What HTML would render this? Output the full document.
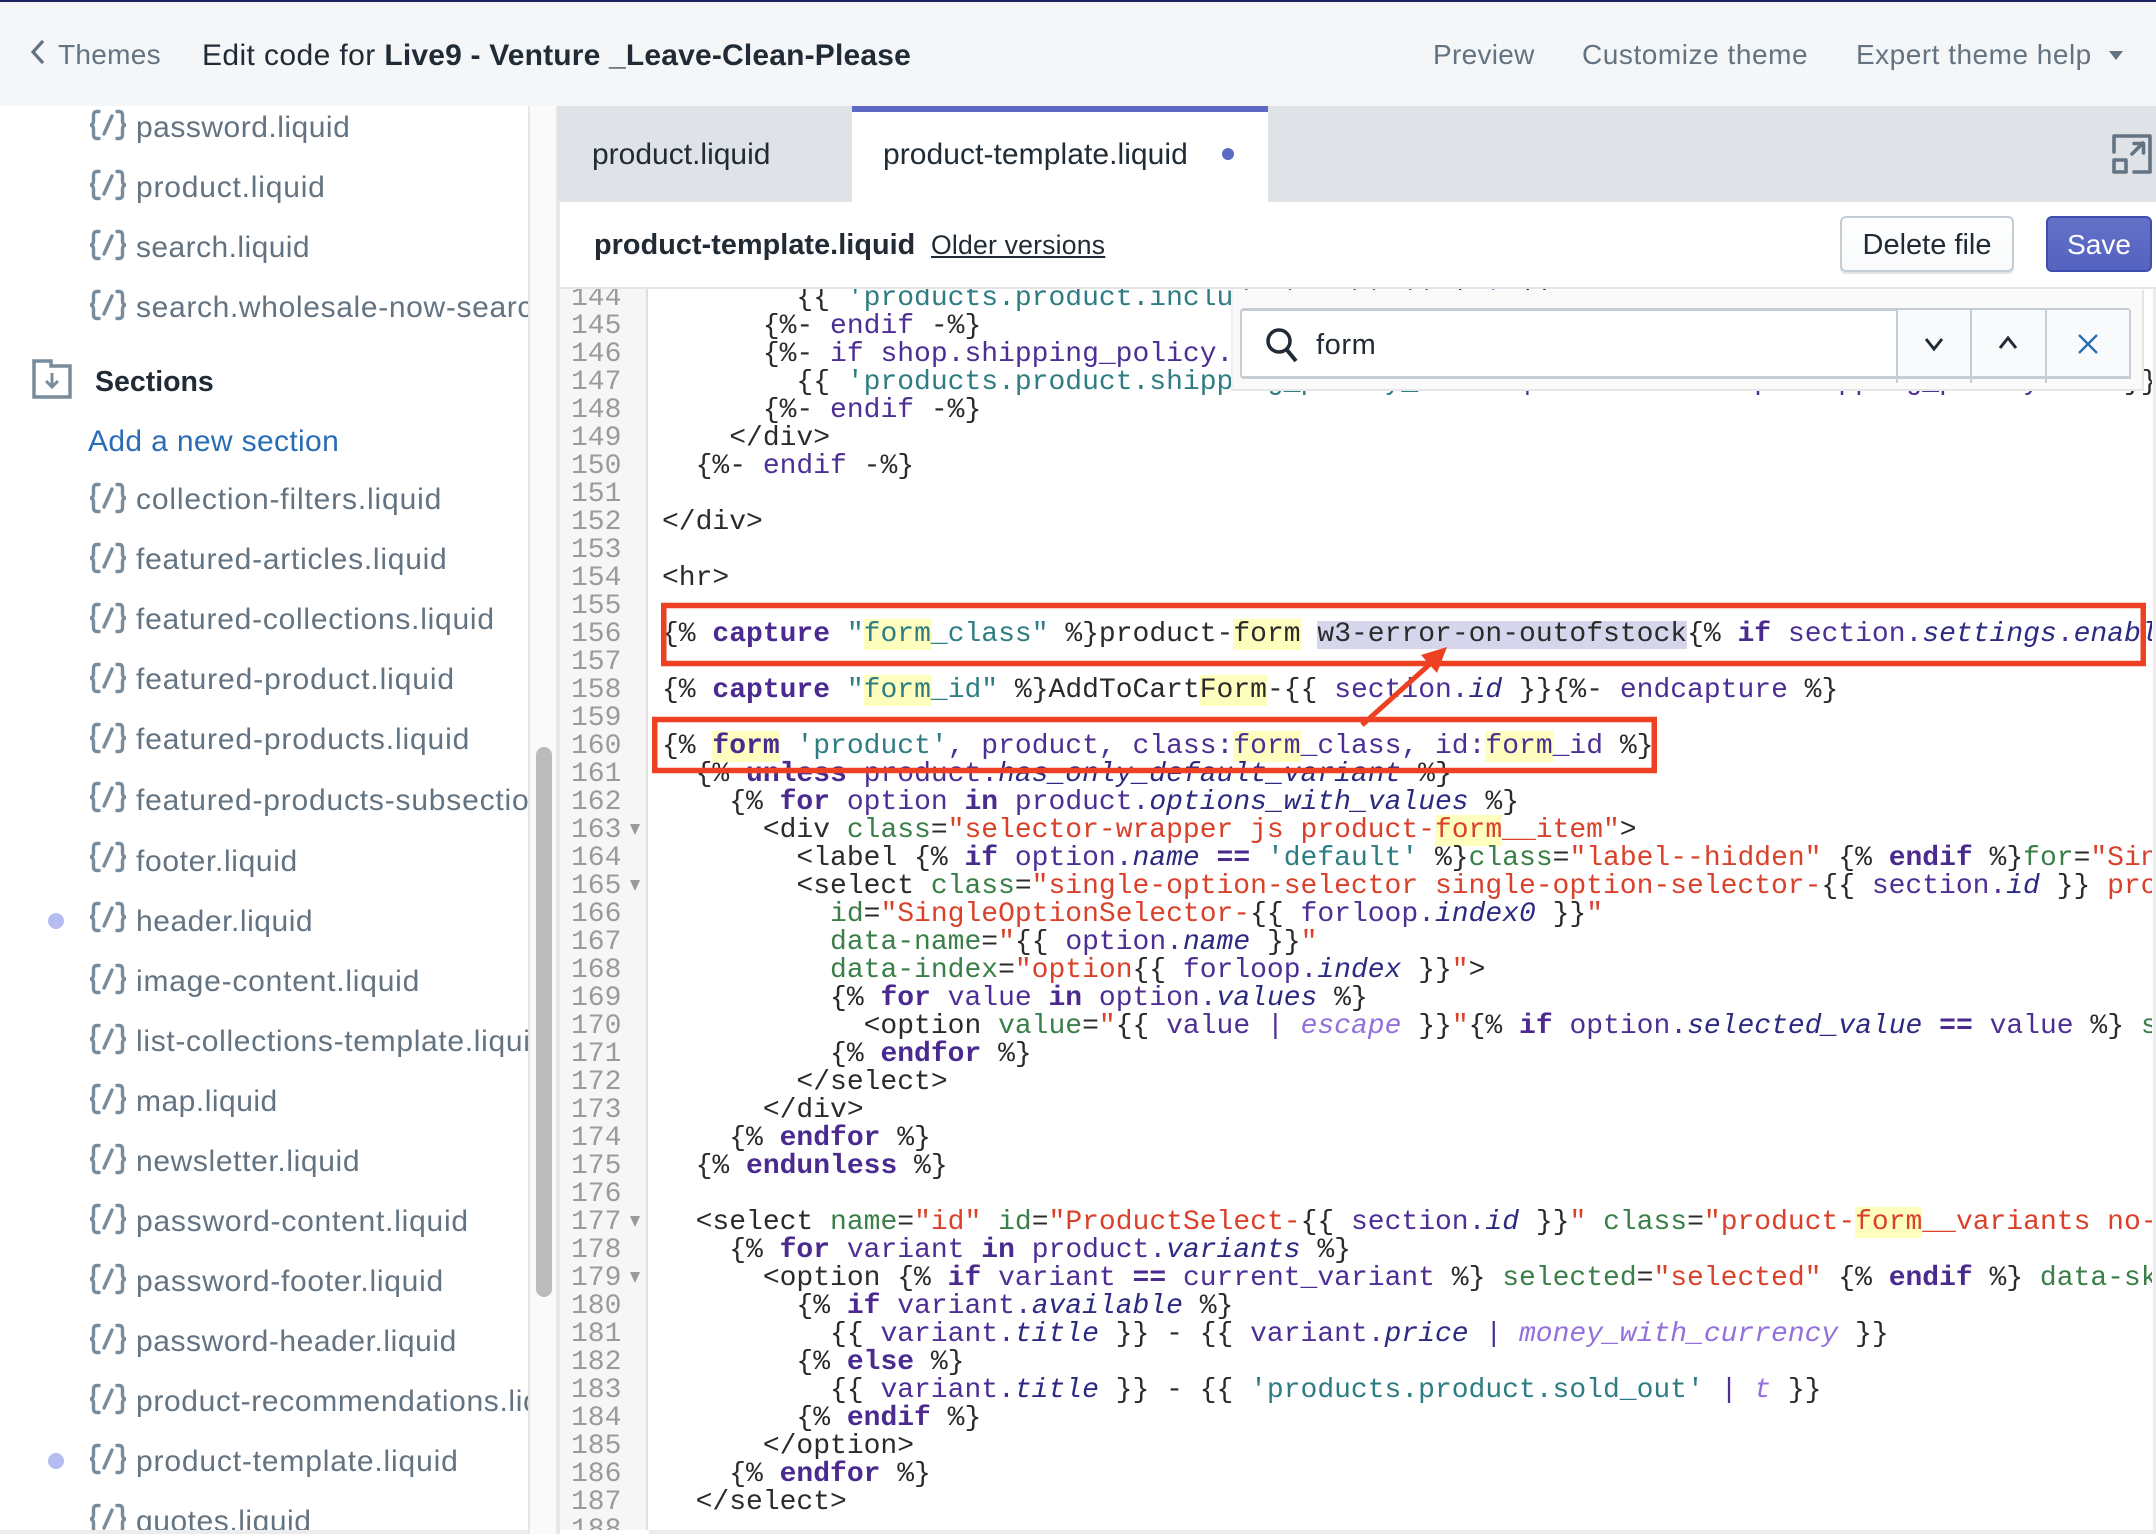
<!DOCTYPE html>
<html>
<head>
<meta charset="utf-8">
<title>Edit code</title>
<style>
html,body{margin:0;padding:0;background:#fff;}
body{width:2156px;height:1534px;position:relative;overflow:hidden;font-family:"Liberation Sans",sans-serif;}
.abs,.t,.r,.ic{position:absolute;}
.t{white-space:pre;line-height:40px;height:40px;}
.h{top:35px;font-size:28px;color:#637381;}
#side{position:absolute;left:0;top:106px;width:528px;height:1424px;overflow:hidden;background:#fff;}
.r{left:136px;font-size:30px;color:#637381;white-space:pre;line-height:40px;height:40px;}
.ic{left:88px;width:40px;height:32px;}
.ic path{fill:none;stroke:#798c9c;stroke-width:3.4;stroke-linecap:round;}
pre{margin:0;font-family:"Liberation Mono",monospace;font-size:28px;line-height:28px;}
#code{position:absolute;left:649px;top:289px;width:1503px;height:1241px;overflow:hidden;background:#fff;}
#code pre{position:absolute;left:13px;top:-4px;color:#2a2a2a;white-space:pre;}
#gut{position:absolute;left:560px;top:289px;width:86px;height:1241px;overflow:hidden;background:#f6f6f6;border-right:2px solid #e0e0e0;}
#gut pre{position:absolute;left:11px;top:-4px;color:#9a9a9a;}
.tri{position:absolute;left:630px;width:0;height:0;border-left:5px solid transparent;border-right:5px solid transparent;border-top:11px solid #999;}
.k{color:#4a2a8f;font-weight:bold;}
.v{color:#4d2e94;}
.p{color:#2b2a80;font-style:italic;}
.s{color:#2e7d82;}
.a{color:#3a7f48;}
.q{color:#d9412a;}
.f{color:#9370db;font-style:italic;}
.m{background:#feffbf;}
.sel{background:#d5d6ec;display:inline-block;height:28px;line-height:28px;vertical-align:top;}
</style>
</head>
<body>
<div class="abs" style="left:0;top:0;width:2156px;height:106px;background:#f4f6f8;"></div>
<div class="abs" style="left:0;top:0;width:2156px;height:2px;background:#1c2260;"></div>
<svg class="abs" style="left:28px;top:38px;" width="20" height="28" viewBox="0 0 20 28"><path d="M15 3 L5 14 L15 25" fill="none" stroke="#637381" stroke-width="3.2"/></svg>
<div class="t h" style="left:58px;letter-spacing:.3px;">Themes</div>
<div class="t" style="left:202px;top:36px;font-size:30px;color:#212b36;letter-spacing:.4px;">Edit code for <b style="letter-spacing:.18px;">Live9 - Venture _Leave-Clean-Please</b></div>
<div class="t h" style="left:1433px;letter-spacing:.3px;">Preview</div>
<div class="t h" style="left:1582px;letter-spacing:.55px;">Customize theme</div>
<div class="t h" style="left:1856px;letter-spacing:.5px;">Expert theme help</div>
<div class="abs" style="left:2109px;top:51px;width:0;height:0;border-left:7px solid transparent;border-right:7px solid transparent;border-top:9px solid #637381;"></div>

<div class="abs" style="left:528px;top:106px;width:2px;height:1428px;background:#e6e6e6;"></div>
<div class="abs" style="left:530px;top:106px;width:26px;height:1428px;background:#fafafa;"></div>
<div class="abs" style="left:556px;top:106px;width:2px;height:1428px;background:#e6e6e6;"></div>
<div class="abs" style="left:558px;top:202px;width:2px;height:1332px;background:#e6e8ec;"></div>
<div class="abs" style="left:536px;top:747px;width:16px;height:550px;background:#bcbcbc;border-radius:8px;"></div>

<div id="side">
<svg class="ic" style="top:3px" viewBox="0 0 40 32"><path d="M11 2.500H9C6.500 2.500 5.500 4 5.500 6V12C5.500 14.500 4 16 2 16C4 16 5.500 17.500 5.500 20V26C5.500 28 6.500 29.500 9 29.500H11M24 7L16 25M29 2.500H31C33.500 2.500 34.500 4 34.500 6V12C34.500 14.500 36 16 38 16C36 16 34.500 17.500 34.500 20V26C34.500 28 33.500 29.500 31 29.500H29"/></svg><div class="r" style="top:2px;letter-spacing:.5px">password.liquid</div>
<svg class="ic" style="top:63px" viewBox="0 0 40 32"><path d="M11 2.500H9C6.500 2.500 5.500 4 5.500 6V12C5.500 14.500 4 16 2 16C4 16 5.500 17.500 5.500 20V26C5.500 28 6.500 29.500 9 29.500H11M24 7L16 25M29 2.500H31C33.500 2.500 34.500 4 34.500 6V12C34.500 14.500 36 16 38 16C36 16 34.500 17.500 34.500 20V26C34.500 28 33.500 29.500 31 29.500H29"/></svg><div class="r" style="top:62px;letter-spacing:.8px">product.liquid</div>
<svg class="ic" style="top:123px" viewBox="0 0 40 32"><path d="M11 2.500H9C6.500 2.500 5.500 4 5.500 6V12C5.500 14.500 4 16 2 16C4 16 5.500 17.500 5.500 20V26C5.500 28 6.500 29.500 9 29.500H11M24 7L16 25M29 2.500H31C33.500 2.500 34.500 4 34.500 6V12C34.500 14.500 36 16 38 16C36 16 34.500 17.500 34.500 20V26C34.500 28 33.500 29.500 31 29.500H29"/></svg><div class="r" style="top:122px;letter-spacing:.43px">search.liquid</div>
<svg class="ic" style="top:183px" viewBox="0 0 40 32"><path d="M11 2.500H9C6.500 2.500 5.500 4 5.500 6V12C5.500 14.500 4 16 2 16C4 16 5.500 17.500 5.500 20V26C5.500 28 6.500 29.500 9 29.500H11M24 7L16 25M29 2.500H31C33.500 2.500 34.500 4 34.500 6V12C34.500 14.500 36 16 38 16C36 16 34.500 17.500 34.500 20V26C34.500 28 33.500 29.500 31 29.500H29"/></svg><div class="r" style="top:182px;letter-spacing:.65px">search.wholesale-now-search.liquid</div>

<svg class="abs" style="left:32px;top:253px;" width="40" height="40" viewBox="0 0 40 40"><path d="M2 2H19V7H38V38H2Z" fill="none" stroke="#798c9c" stroke-width="3.5"/><path d="M20 14V28M14 22L20 28L26 22" fill="none" stroke="#798c9c" stroke-width="3"/></svg>
<div class="r" style="left:95px;top:256px;font-size:28.500px;letter-spacing:0;font-weight:bold;color:#212b36;">Sections</div>
<div class="r" style="left:88px;top:316px;letter-spacing:.35px;color:#2a6db5;">Add a new section</div>

<svg class="ic" style="top:376px" viewBox="0 0 40 32"><path d="M11 2.500H9C6.500 2.500 5.500 4 5.500 6V12C5.500 14.500 4 16 2 16C4 16 5.500 17.500 5.500 20V26C5.500 28 6.500 29.500 9 29.500H11M24 7L16 25M29 2.500H31C33.500 2.500 34.500 4 34.500 6V12C34.500 14.500 36 16 38 16C36 16 34.500 17.500 34.500 20V26C34.500 28 33.500 29.500 31 29.500H29"/></svg><div class="r" style="top:374px;letter-spacing:.84px">collection-filters.liquid</div>
<svg class="ic" style="top:436px" viewBox="0 0 40 32"><path d="M11 2.500H9C6.500 2.500 5.500 4 5.500 6V12C5.500 14.500 4 16 2 16C4 16 5.500 17.500 5.500 20V26C5.500 28 6.500 29.500 9 29.500H11M24 7L16 25M29 2.500H31C33.500 2.500 34.500 4 34.500 6V12C34.500 14.500 36 16 38 16C36 16 34.500 17.500 34.500 20V26C34.500 28 33.500 29.500 31 29.500H29"/></svg><div class="r" style="top:434px;letter-spacing:.75px">featured-articles.liquid</div>
<svg class="ic" style="top:496px" viewBox="0 0 40 32"><path d="M11 2.500H9C6.500 2.500 5.500 4 5.500 6V12C5.500 14.500 4 16 2 16C4 16 5.500 17.500 5.500 20V26C5.500 28 6.500 29.500 9 29.500H11M24 7L16 25M29 2.500H31C33.500 2.500 34.500 4 34.500 6V12C34.500 14.500 36 16 38 16C36 16 34.500 17.500 34.500 20V26C34.500 28 33.500 29.500 31 29.500H29"/></svg><div class="r" style="top:494px;letter-spacing:.75px">featured-collections.liquid</div>
<svg class="ic" style="top:556px" viewBox="0 0 40 32"><path d="M11 2.500H9C6.500 2.500 5.500 4 5.500 6V12C5.500 14.500 4 16 2 16C4 16 5.500 17.500 5.500 20V26C5.500 28 6.500 29.500 9 29.500H11M24 7L16 25M29 2.500H31C33.500 2.500 34.500 4 34.500 6V12C34.500 14.500 36 16 38 16C36 16 34.500 17.500 34.500 20V26C34.500 28 33.500 29.500 31 29.500H29"/></svg><div class="r" style="top:554px;letter-spacing:.89px">featured-product.liquid</div>
<svg class="ic" style="top:616px" viewBox="0 0 40 32"><path d="M11 2.500H9C6.500 2.500 5.500 4 5.500 6V12C5.500 14.500 4 16 2 16C4 16 5.500 17.500 5.500 20V26C5.500 28 6.500 29.500 9 29.500H11M24 7L16 25M29 2.500H31C33.500 2.500 34.500 4 34.500 6V12C34.500 14.500 36 16 38 16C36 16 34.500 17.500 34.500 20V26C34.500 28 33.500 29.500 31 29.500H29"/></svg><div class="r" style="top:614px;letter-spacing:.86px">featured-products.liquid</div>
<svg class="ic" style="top:675px" viewBox="0 0 40 32"><path d="M11 2.500H9C6.500 2.500 5.500 4 5.500 6V12C5.500 14.500 4 16 2 16C4 16 5.500 17.500 5.500 20V26C5.500 28 6.500 29.500 9 29.500H11M24 7L16 25M29 2.500H31C33.500 2.500 34.500 4 34.500 6V12C34.500 14.500 36 16 38 16C36 16 34.500 17.500 34.500 20V26C34.500 28 33.500 29.500 31 29.500H29"/></svg><div class="r" style="top:675px;letter-spacing:.8px">featured-products-subsection.liquid</div>
<svg class="ic" style="top:735px" viewBox="0 0 40 32"><path d="M11 2.500H9C6.500 2.500 5.500 4 5.500 6V12C5.500 14.500 4 16 2 16C4 16 5.500 17.500 5.500 20V26C5.500 28 6.500 29.500 9 29.500H11M24 7L16 25M29 2.500H31C33.500 2.500 34.500 4 34.500 6V12C34.500 14.500 36 16 38 16C36 16 34.500 17.500 34.500 20V26C34.500 28 33.500 29.500 31 29.500H29"/></svg><div class="r" style="top:736px;letter-spacing:.65px">footer.liquid</div>
<div class="abs" style="left:48px;top:807px;width:16px;height:16px;border-radius:50%;background:#b4bcf0;"></div>
<svg class="ic" style="top:795px" viewBox="0 0 40 32"><path d="M11 2.500H9C6.500 2.500 5.500 4 5.500 6V12C5.500 14.500 4 16 2 16C4 16 5.500 17.500 5.500 20V26C5.500 28 6.500 29.500 9 29.500H11M24 7L16 25M29 2.500H31C33.500 2.500 34.500 4 34.500 6V12C34.500 14.500 36 16 38 16C36 16 34.500 17.500 34.500 20V26C34.500 28 33.500 29.500 31 29.500H29"/></svg><div class="r" style="top:796px;letter-spacing:.54px">header.liquid</div>
<svg class="ic" style="top:857px" viewBox="0 0 40 32"><path d="M11 2.500H9C6.500 2.500 5.500 4 5.500 6V12C5.500 14.500 4 16 2 16C4 16 5.500 17.500 5.500 20V26C5.500 28 6.500 29.500 9 29.500H11M24 7L16 25M29 2.500H31C33.500 2.500 34.500 4 34.500 6V12C34.500 14.500 36 16 38 16C36 16 34.500 17.500 34.500 20V26C34.500 28 33.500 29.500 31 29.500H29"/></svg><div class="r" style="top:856px;letter-spacing:.78px">image-content.liquid</div>
<svg class="ic" style="top:917px" viewBox="0 0 40 32"><path d="M11 2.500H9C6.500 2.500 5.500 4 5.500 6V12C5.500 14.500 4 16 2 16C4 16 5.500 17.500 5.500 20V26C5.500 28 6.500 29.500 9 29.500H11M24 7L16 25M29 2.500H31C33.500 2.500 34.500 4 34.500 6V12C34.500 14.500 36 16 38 16C36 16 34.500 17.500 34.500 20V26C34.500 28 33.500 29.500 31 29.500H29"/></svg><div class="r" style="top:916px;letter-spacing:.68px">list-collections-template.liquid</div>
<svg class="ic" style="top:977px" viewBox="0 0 40 32"><path d="M11 2.500H9C6.500 2.500 5.500 4 5.500 6V12C5.500 14.500 4 16 2 16C4 16 5.500 17.500 5.500 20V26C5.500 28 6.500 29.500 9 29.500H11M24 7L16 25M29 2.500H31C33.500 2.500 34.500 4 34.500 6V12C34.500 14.500 36 16 38 16C36 16 34.500 17.500 34.500 20V26C34.500 28 33.500 29.500 31 29.500H29"/></svg><div class="r" style="top:976px;letter-spacing:.5px">map.liquid</div>
<svg class="ic" style="top:1037px" viewBox="0 0 40 32"><path d="M11 2.500H9C6.500 2.500 5.500 4 5.500 6V12C5.500 14.500 4 16 2 16C4 16 5.500 17.500 5.500 20V26C5.500 28 6.500 29.500 9 29.500H11M24 7L16 25M29 2.500H31C33.500 2.500 34.500 4 34.500 6V12C34.500 14.500 36 16 38 16C36 16 34.500 17.500 34.500 20V26C34.500 28 33.500 29.500 31 29.500H29"/></svg><div class="r" style="top:1036px;letter-spacing:.63px">newsletter.liquid</div>
<svg class="ic" style="top:1097px" viewBox="0 0 40 32"><path d="M11 2.500H9C6.500 2.500 5.500 4 5.500 6V12C5.500 14.500 4 16 2 16C4 16 5.500 17.500 5.500 20V26C5.500 28 6.500 29.500 9 29.500H11M24 7L16 25M29 2.500H31C33.500 2.500 34.500 4 34.500 6V12C34.500 14.500 36 16 38 16C36 16 34.500 17.500 34.500 20V26C34.500 28 33.500 29.500 31 29.500H29"/></svg><div class="r" style="top:1096px;letter-spacing:.77px">password-content.liquid</div>
<svg class="ic" style="top:1157px" viewBox="0 0 40 32"><path d="M11 2.500H9C6.500 2.500 5.500 4 5.500 6V12C5.500 14.500 4 16 2 16C4 16 5.500 17.500 5.500 20V26C5.500 28 6.500 29.500 9 29.500H11M24 7L16 25M29 2.500H31C33.500 2.500 34.500 4 34.500 6V12C34.500 14.500 36 16 38 16C36 16 34.500 17.500 34.500 20V26C34.500 28 33.500 29.500 31 29.500H29"/></svg><div class="r" style="top:1156px;letter-spacing:.73px">password-footer.liquid</div>
<svg class="ic" style="top:1217px" viewBox="0 0 40 32"><path d="M11 2.500H9C6.500 2.500 5.500 4 5.500 6V12C5.500 14.500 4 16 2 16C4 16 5.500 17.500 5.500 20V26C5.500 28 6.500 29.500 9 29.500H11M24 7L16 25M29 2.500H31C33.500 2.500 34.500 4 34.500 6V12C34.500 14.500 36 16 38 16C36 16 34.500 17.500 34.500 20V26C34.500 28 33.500 29.500 31 29.500H29"/></svg><div class="r" style="top:1216px;letter-spacing:.56px">password-header.liquid</div>
<svg class="ic" style="top:1277px" viewBox="0 0 40 32"><path d="M11 2.500H9C6.500 2.500 5.500 4 5.500 6V12C5.500 14.500 4 16 2 16C4 16 5.500 17.500 5.500 20V26C5.500 28 6.500 29.500 9 29.500H11M24 7L16 25M29 2.500H31C33.500 2.500 34.500 4 34.500 6V12C34.500 14.500 36 16 38 16C36 16 34.500 17.500 34.500 20V26C34.500 28 33.500 29.500 31 29.500H29"/></svg><div class="r" style="top:1276px;letter-spacing:.65px">product-recommendations.liquid</div>
<div class="abs" style="left:48px;top:1347px;width:16px;height:16px;border-radius:50%;background:#b4bcf0;"></div>
<svg class="ic" style="top:1337px" viewBox="0 0 40 32"><path d="M11 2.500H9C6.500 2.500 5.500 4 5.500 6V12C5.500 14.500 4 16 2 16C4 16 5.500 17.500 5.500 20V26C5.500 28 6.500 29.500 9 29.500H11M24 7L16 25M29 2.500H31C33.500 2.500 34.500 4 34.500 6V12C34.500 14.500 36 16 38 16C36 16 34.500 17.500 34.500 20V26C34.500 28 33.500 29.500 31 29.500H29"/></svg><div class="r" style="top:1336px;letter-spacing:.83px">product-template.liquid</div>
<svg class="ic" style="top:1397px" viewBox="0 0 40 32"><path d="M11 2.500H9C6.500 2.500 5.500 4 5.500 6V12C5.500 14.500 4 16 2 16C4 16 5.500 17.500 5.500 20V26C5.500 28 6.500 29.500 9 29.500H11M24 7L16 25M29 2.500H31C33.500 2.500 34.500 4 34.500 6V12C34.500 14.500 36 16 38 16C36 16 34.500 17.500 34.500 20V26C34.500 28 33.500 29.500 31 29.500H29"/></svg><div class="r" style="top:1396px;letter-spacing:.54px">quotes.liquid</div>
</div>
<div class="abs" style="left:0;top:1530px;width:528px;height:4px;background:#ececec;"></div>

<div class="abs" style="left:558px;top:106px;width:1598px;height:96px;background:#dfe3e8;"></div>
<div class="abs" style="left:852px;top:106px;width:416px;height:96px;background:#fff;"></div>
<div class="abs" style="left:852px;top:106px;width:416px;height:6px;background:#5c6ac4;"></div>
<div class="t" style="left:592px;top:135px;font-size:30px;color:#212b36;">product.liquid</div>
<div class="t" style="left:883px;top:135px;font-size:30px;color:#212b36;letter-spacing:.06px;">product-template.liquid</div>
<div class="abs" style="left:1222px;top:148px;width:12px;height:12px;border-radius:50%;background:#5c6ac4;"></div>
<svg class="abs" style="left:2110px;top:132px;" width="44" height="44" viewBox="0 0 44 44"><path d="M4 20V4H40V40H24M4 28H16V40H4ZM22 22L33 11M24 11.500H33.500V21" fill="none" stroke="#637381" stroke-width="3.600" stroke-linecap="round" stroke-linejoin="round"/></svg>

<div class="t" style="left:594px;top:225px;font-size:28.800px;font-weight:bold;color:#212b36;letter-spacing:.06px;">product-template.liquid</div>
<div class="t" style="left:931px;top:225px;font-size:26.600px;color:#212b36;text-decoration:underline;letter-spacing:.2px;">Older versions</div>
<div class="abs" style="left:1840px;top:216px;width:174px;height:56px;box-sizing:border-box;border:2px solid #c4cdd5;border-radius:6px;background:linear-gradient(#fff,#f9fafb);box-shadow:0 2px 0 #e3e6e9;text-align:center;line-height:54px;font-size:29px;color:#212b36;">Delete file</div>
<div class="abs" style="left:2046px;top:216px;width:106px;height:56px;box-sizing:border-box;border:2px solid #3f4eae;border-radius:6px;background:linear-gradient(#6371c7,#5563c1);text-align:center;line-height:54px;font-size:28px;color:#fff;">Save</div>

<div class="abs" style="left:560px;top:287px;width:1596px;height:2px;background:#e4e4e4;"></div>
<div id="gut"><pre>144
145
146
147
148
149
150
151
152
153
154
155
156
157
158
159
160
161
162
163
164
165
166
167
168
169
170
171
172
173
174
175
176
177
178
179
180
181
182
183
184
185
186
187
188</pre></div>
<div class="tri" style="top:824px"></div>
<div class="tri" style="top:880px"></div>
<div class="tri" style="top:1216px"></div>
<div class="tri" style="top:1272px"></div>

<div id="code"><pre>        {{ <span class="s">'products.product.include_tax_html'</span> <span class="v">|</span> <span class="f">t</span> }}
      {%- <span class="v">endif</span> -%}
      {%- <span class="v">if shop.shipping_policy.body</span> <span class="k">!=</span> <span class="v">blank</span> -%}
        {{ <span class="s">'products.product.shipping_policy_html'</span> <span class="v">|</span> <span class="f">t</span>: <span class="v">link</span>: <span class="v">shop.shipping_policy.url</span> }}
      {%- <span class="v">endif</span> -%}
    &lt;/div&gt;
  {%- <span class="v">endif</span> -%}

&lt;/div&gt;

&lt;hr&gt;

{% <span class="k">capture</span> <span class="s">"<span class="m">form</span>_class"</span> %}product-<span class="m">form</span> <span class="sel">w3-error-on-outofstock</span>{% <span class="k">if</span> <span class="v">section.</span><span class="p">settings</span><span class="v">.</span><span class="p">enable_history_state</span> %}

{% <span class="k">capture</span> <span class="s">"<span class="m">form</span>_id"</span> %}AddToCart<span class="m">Form</span>-{{ <span class="v">section.</span><span class="p">id</span> }}{%- <span class="v">endcapture</span> %}

{% <span class="k m">form</span> <span class="s">'product'</span><span class="v">, product, class:<span class="m">form</span>_class, id:<span class="m">form</span>_id</span> %}
  {% <span class="k">unless</span> <span class="v">product.</span><span class="p">has_only_default_variant</span> %}
    {% <span class="k">for</span> <span class="v">option</span> <span class="k">in</span> <span class="v">product.</span><span class="p">options_with_values</span> %}
      &lt;div <span class="a">class</span>=<span class="q">"selector-wrapper js product-<span class="m">form</span>__item"</span>&gt;
        &lt;label {% <span class="k">if</span> <span class="v">option.</span><span class="p">name</span> <span class="k">==</span> <span class="s">'default'</span> %}<span class="a">class</span>=<span class="q">"label--hidden"</span> {% <span class="k">endif</span> %}<span class="a">for</span>=<span class="q">"SingleOptionSelector-{{ forloop.index0 }}"</span>&gt;
        &lt;select <span class="a">class</span>=<span class="q">"single-option-selector single-option-selector-</span>{{ <span class="v">section.</span><span class="p">id</span> }} <span class="q">product-<span class="m">form</span>__input"</span>
          <span class="a">id</span>=<span class="q">"SingleOptionSelector-</span>{{ <span class="v">forloop.</span><span class="p">index0</span> }}<span class="q">"</span>
          <span class="a">data-name</span>=<span class="q">"</span>{{ <span class="v">option.</span><span class="p">name</span> }}<span class="q">"</span>
          <span class="a">data-index</span>=<span class="q">"option</span>{{ <span class="v">forloop.</span><span class="p">index</span> }}<span class="q">"</span>&gt;
          {% <span class="k">for</span> <span class="v">value</span> <span class="k">in</span> <span class="v">option.</span><span class="p">values</span> %}
            &lt;option <span class="a">value</span>=<span class="q">"</span>{{ <span class="v">value |</span> <span class="f">escape</span> }}<span class="q">"</span>{% <span class="k">if</span> <span class="v">option.</span><span class="p">selected_value</span> <span class="k">==</span> <span class="v">value</span> %} <span class="a">selected</span>=<span class="q">"selected"</span>
          {% <span class="k">endfor</span> %}
        &lt;/select&gt;
      &lt;/div&gt;
    {% <span class="k">endfor</span> %}
  {% <span class="k">endunless</span> %}

  &lt;select <span class="a">name</span>=<span class="q">"id"</span> <span class="a">id</span>=<span class="q">"ProductSelect-</span>{{ <span class="v">section.</span><span class="p">id</span> }}<span class="q">"</span> <span class="a">class</span>=<span class="q">"product-<span class="m">form</span>__variants no-js"</span>&gt;
    {% <span class="k">for</span> <span class="v">variant</span> <span class="k">in</span> <span class="v">product.</span><span class="p">variants</span> %}
      &lt;option {% <span class="k">if</span> <span class="v">variant</span> <span class="k">==</span> <span class="v">current_variant</span> %} <span class="a">selected</span>=<span class="q">"selected"</span> {% <span class="k">endif</span> %} <span class="a">data-sku</span>=<span class="q">"{{ variant.sku }}"</span>
        {% <span class="k">if</span> <span class="v">variant.</span><span class="p">available</span> %}
          {{ <span class="v">variant.</span><span class="p">title</span> }} - {{ <span class="v">variant.</span><span class="p">price</span> <span class="v">|</span> <span class="f">money_with_currency</span> }}
        {% <span class="k">else</span> %}
          {{ <span class="v">variant.</span><span class="p">title</span> }} - {{ <span class="s">'products.product.sold_out'</span> <span class="v">|</span> <span class="f">t</span> }}
        {% <span class="k">endif</span> %}
      &lt;/option&gt;
    {% <span class="k">endfor</span> %}
  &lt;/select&gt;
</pre></div>
<div class="abs" style="left:2153px;top:289px;width:3px;height:1245px;background:#ececec;"></div>
<div class="abs" style="left:649px;top:1530px;width:1507px;height:4px;background:#ececec;"></div>

<div class="abs" style="left:1231px;top:290px;width:913px;height:101px;box-sizing:border-box;background:#fafafa;border-bottom:2px solid #e6e6e6;border-right:2px solid #e6e6e6;border-left:2px solid #efefef;"></div>
<div class="abs" style="left:1240px;top:308px;width:891px;height:71px;box-sizing:border-box;background:#fff;border:2px solid #c4cdd5;border-top-width:3px;border-bottom-width:3px;border-radius:4px;"></div>
<div class="abs" style="left:1896px;top:310px;width:235px;height:70px;background:#f9fafb;"></div>
<div class="abs" style="left:1896px;top:310px;width:2px;height:73px;background:#c4cdd5;"></div>
<div class="abs" style="left:1970px;top:310px;width:2px;height:73px;background:#c4cdd5;"></div>
<div class="abs" style="left:2045px;top:310px;width:2px;height:73px;background:#c4cdd5;"></div>
<div class="abs" style="left:2129px;top:310px;width:2px;height:68px;background:#c4cdd5;"></div>
<div class="abs" style="left:1896px;top:376px;width:235px;height:3px;background:#c4cdd5;"></div>
<svg class="abs" style="left:1262px;top:326px;" width="40" height="40" viewBox="0 0 40 40"><circle cx="17" cy="15" r="11" fill="none" stroke="#212b36" stroke-width="3.500"/><path d="M25 24L34 35" fill="none" stroke="#212b36" stroke-width="4"/></svg>
<div class="t" style="left:1316px;top:325px;font-size:29px;letter-spacing:.6px;color:#212b36;">form</div>
<svg class="abs" style="left:1920px;top:334px;" width="28" height="20" viewBox="0 0 28 20"><path d="M6 5L14 15L22 5" fill="none" stroke="#212b36" stroke-width="3"/></svg>
<svg class="abs" style="left:1994px;top:333px;" width="28" height="20" viewBox="0 0 28 20"><path d="M6 15L14 5L22 15" fill="none" stroke="#212b36" stroke-width="3"/></svg>
<svg class="abs" style="left:2076px;top:332px;" width="24" height="24" viewBox="0 0 24 24"><path d="M3 3L21 21M21 3L3 21" fill="none" stroke="#2a6db5" stroke-width="2.400"/></svg>

<svg class="abs" style="left:0;top:0;pointer-events:none;" width="2156" height="1534" viewBox="0 0 2156 1534">
<rect x="663.750" y="605.500" width="1479.500" height="58" fill="none" stroke="#ee4023" stroke-width="5.500"/>
<rect x="654.750" y="719.500" width="999.500" height="51" fill="none" stroke="#ee4023" stroke-width="5.500"/>
<path d="M1362 725L1430 664" fill="none" stroke="#ee4023" stroke-width="5"/>
<path d="M1447 647L1421 655L1437 673Z" fill="#ee4023"/>
</svg>
</body>
</html>
